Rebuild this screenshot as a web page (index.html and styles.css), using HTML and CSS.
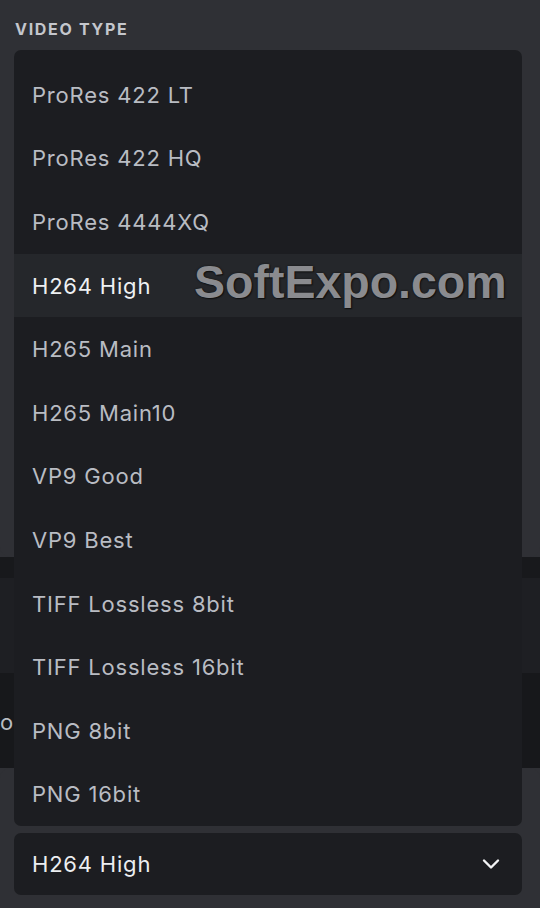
FILE: index.html
```html
<!DOCTYPE html>
<html>
<head>
<meta charset="utf-8">
<link rel="stylesheet" href="styles.css">
</head>
<body>
<div class="page">
  <section class="panel-top">
    <div class="label">VIDEO TYPE</div>
  </section>
  <div class="strip"></div>
  <div class="row row-a"></div>
  <div class="row row-b"><span class="cut">o</span></div>
  <section class="panel-bottom">
    <div class="select">
      <span class="select-value">H264 High</span>
      <svg class="chev" width="18" height="12" viewBox="0 0 18 12"><path d="M2 2.5 L9 9.5 L16 2.5" fill="none" stroke="#f2f3f5" stroke-width="2.4" stroke-linecap="round" stroke-linejoin="round"/></svg>
    </div>
  </section>

  <ul class="menu">
    <li class="item">ProRes 422 LT</li>
    <li class="item">ProRes 422 HQ</li>
    <li class="item">ProRes 4444XQ</li>
    <li class="item active">H264 High</li>
    <li class="item">H265 Main</li>
    <li class="item">H265 Main10</li>
    <li class="item">VP9 Good</li>
    <li class="item">VP9 Best</li>
    <li class="item">TIFF Lossless 8bit</li>
    <li class="item">TIFF Lossless 16bit</li>
    <li class="item">PNG 8bit</li>
    <li class="item">PNG 16bit</li>
  </ul>

  <div class="watermark">SoftExpo.com</div>
</div>
</body>
</html>
```

FILE: styles.css
```css
html, body {
  margin: 0;
  padding: 0;
  background: #2f3035;
  font-family: "Inter", "Noto Sans", sans-serif;
}
.page {
  position: relative;
  width: 540px;
  height: 908px;
  overflow: hidden;
  display: flex;
  flex-direction: column;
}
.panel-top {
  height: 557px;
  background: #2f3035;
  border-radius: 0 0 10px 10px;
  padding: 20px 15px 0;
  box-sizing: border-box;
}
.label {
  color: #c4c6cc;
  font-size: 16px;
  font-weight: 700;
  letter-spacing: 1.7px;
  line-height: 18px;
}
.strip {
  height: 21px;
  background: #18191c;
}
.row {
  height: 95px;
  display: flex;
  align-items: center;
}
.row-a { background: #1e1f23; }
.row-b { background: #17181b; }
.cut {
  color: #b9bcc3;
  font-size: 22px;
  margin-left: 0;
  margin-top: 2px;
}
.panel-bottom {
  flex: 1;
  background: #2f3035;
  border-radius: 10px 10px 0 0;
  padding: 65px 18px 0 14px;
}
.select {
  height: 62px;
  background: #1c1d21;
  border-radius: 7px;
  display: flex;
  align-items: center;
  justify-content: space-between;
  padding: 0 22px 0 18px;
}
.select-value {
  color: #eceef1;
  font-size: 22px;
  letter-spacing: 0.8px;
  line-height: 26px;
}
.chev { display: block; }
.menu {
  position: absolute;
  left: 14px;
  top: 50px;
  width: 508px;
  height: 776px;
  margin: 0;
  padding: 13px 0 0;
  box-sizing: border-box;
  list-style: none;
  background: #1c1d21;
  border-radius: 7px;
  overflow: hidden;
}
.item {
  height: 63.6px;
  display: flex;
  align-items: center;
  padding-left: 18px;
  color: #b9bcc3;
  font-size: 22px;
  letter-spacing: 0.8px;
}
.item.active {
  background: #25272b;
  color: #eef0f3;
}
.watermark {
  position: absolute;
  left: 194px;
  top: 257px;
  font-family: "Liberation Sans", Arial, sans-serif;
  font-weight: 700;
  font-size: 46.5px;
  line-height: 50px;
  color: #8a8b8f;
  text-shadow: 0 0 2px #111, 1px 1px 1px #111;
}
```
